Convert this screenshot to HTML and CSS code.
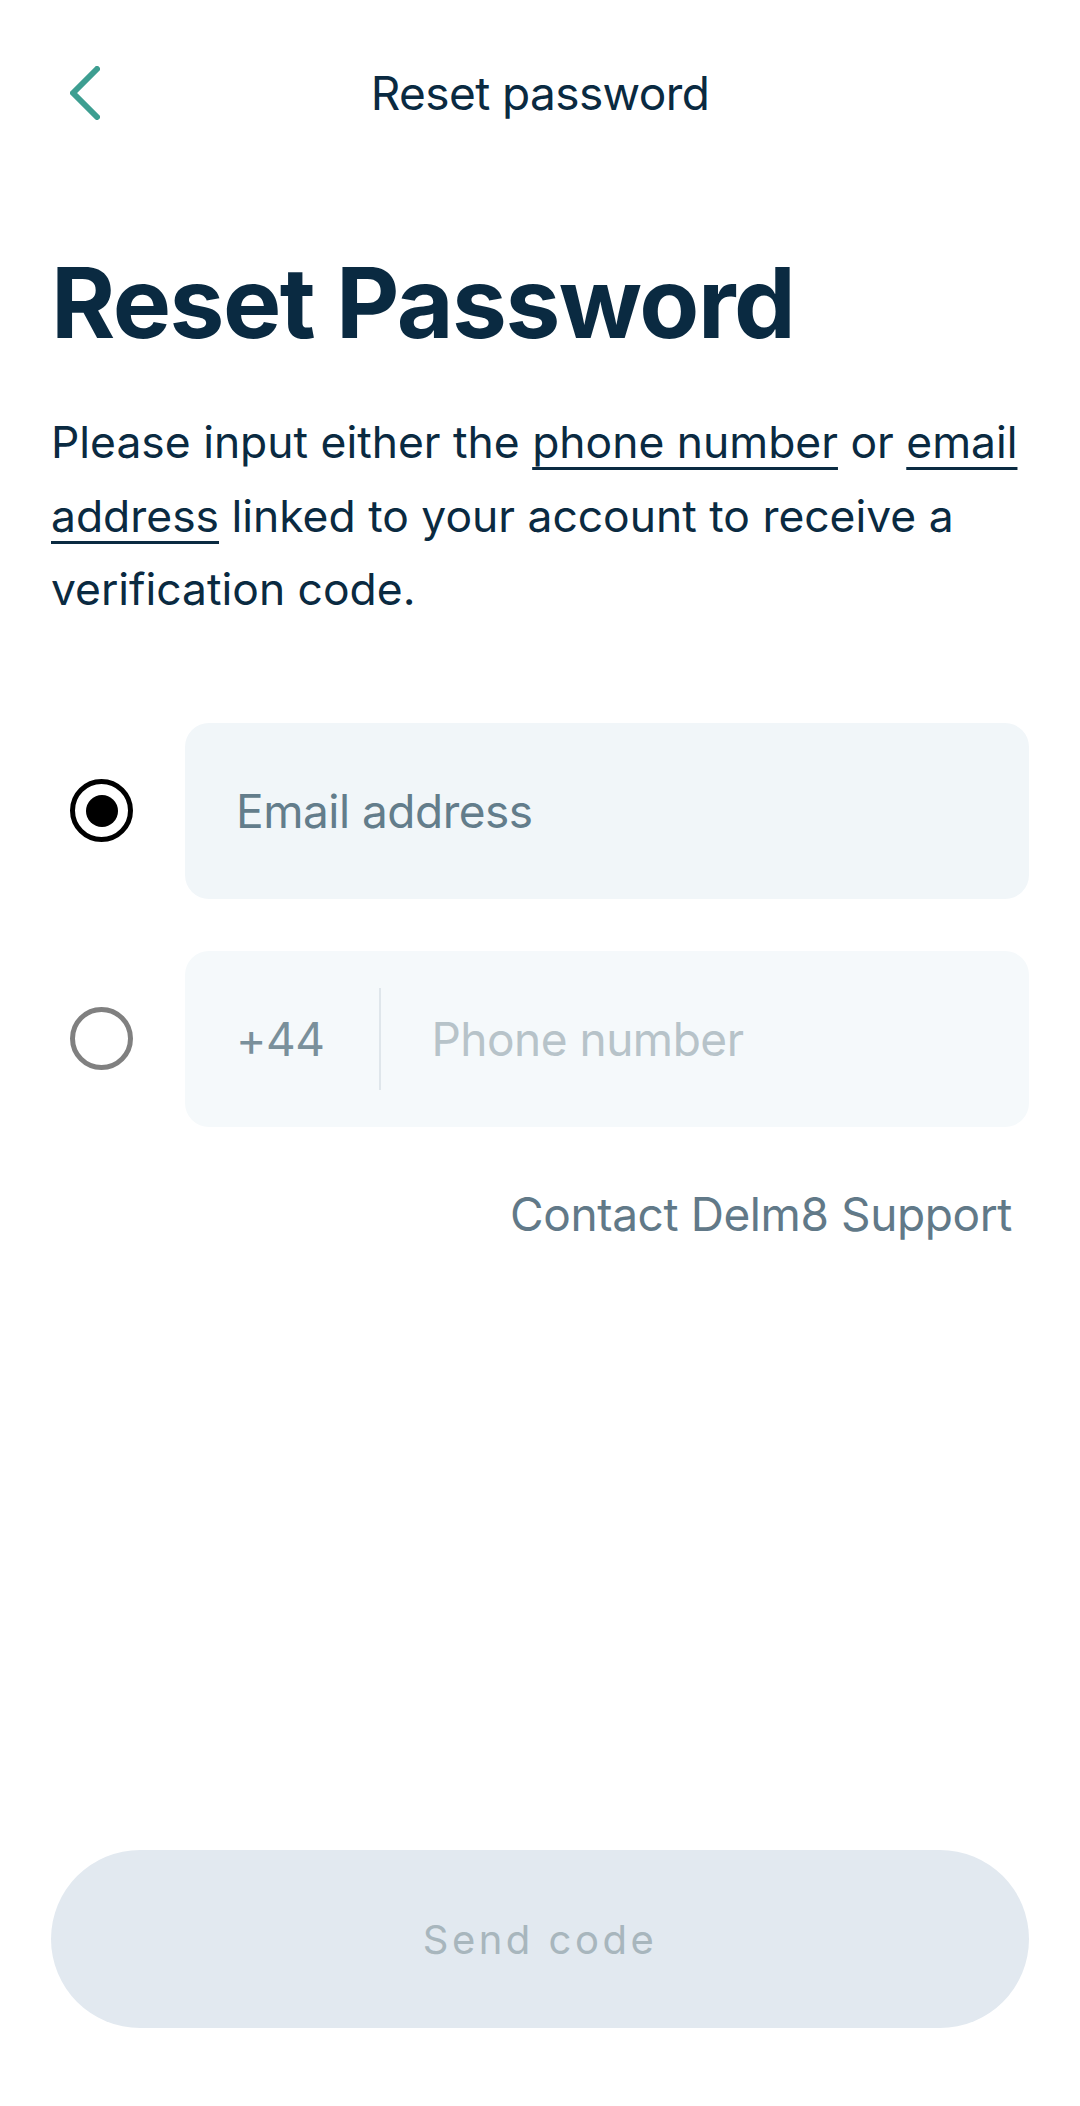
FILE: index.html
```html
<!DOCTYPE html>
<html lang="en">
<head>
  <meta charset="UTF-8" />
  <title>Reset password</title>
  <link rel="stylesheet" href="styles.css">
</head>
<body>

  <div class="page">
    <div class="nav">
      <a class="back" href="#">
        <svg width="30" height="54" viewBox="0 0 30 54">
          <polyline points="27,3 3,27 27,51" fill="none" stroke="#3d9e91" stroke-width="6" stroke-linecap="round" stroke-linejoin="round" />
        </svg>
      </a>
      <div class="nav-title">Reset password</div>
      <div></div>
    </div>

    <h1>Reset Password</h1>
    <p class="intro">Please input either the <u>phone number</u> or <u>email </u><u>address</u> linked to your account to receive a verification code.</p>

    <form class="reset-form">
      <label class="option">
        <span class="radio checked"></span>
        <span class="field">
          <input type="email" placeholder="Email address" />
        </span>
      </label>

      <label class="option">
        <span class="radio"></span>
        <span class="field phone">
          <span class="prefix">+44</span>
          <span class="divider"></span>
          <input type="tel" placeholder="Phone number" disabled />
        </span>
      </label>

      <a class="support" href="#">Contact Delm8 Support</a>
    </form>

    <button class="send-button" type="button" disabled>Send code</button>
  </div>

</body>
</html>
```

FILE: styles.css
```css
* {
  box-sizing: border-box;
}

body {
  margin: 0;
  font-family: 'Inter', 'Noto Sans', sans-serif;
  background: #ffffff;
  color: #0a2a41;
}

.page {
  min-height: 2106px;
  padding: 0 51px 78px;
  display: flex;
  flex-direction: column;
}

.nav {
  height: 184px;
  padding-top: 2px;
  display: grid;
  grid-template-columns: 1fr auto 1fr;
  align-items: center;
}

.back {
  display: flex;
  padding-left: 19px;
}

.nav-title {
  font-size: 46px;
  letter-spacing: -0.6px;
  color: #0a2a41;
}

h1 {
  margin: 60px 0 0;
  font-size: 98px;
  line-height: 118px;
  font-weight: 700;
  letter-spacing: -1.5px;
  color: #0a2a41;
}

.intro {
  margin: 44px 0 0;
  font-size: 44.4px;
  line-height: 73.5px;
  color: #0a2a41;
}

.intro u {
  text-decoration-thickness: 3px;
  text-underline-offset: 9px;
}

.reset-form {
  margin-top: 96px;
  display: flex;
  flex-direction: column;
  gap: 52px;
}

.option {
  display: flex;
  align-items: center;
  gap: 52px;
  padding-left: 19px;
}

.radio {
  width: 63px;
  height: 63px;
  flex: none;
  border-radius: 50%;
  border: 5.5px solid #808080;
  display: flex;
  align-items: center;
  justify-content: center;
}

.radio.checked {
  border-color: #000000;
}

.radio.checked::after {
  content: "";
  width: 32px;
  height: 32px;
  border-radius: 50%;
  background: #000000;
}

.field {
  flex: 1;
  min-width: 0;
  height: 176px;
  border-radius: 24px;
  background: #f1f6f9;
  padding: 0 51px;
  display: flex;
  align-items: center;
}

.field.phone {
  background: #f5f9fb;
}

.field input {
  flex: 1;
  min-width: 0;
  width: 100%;
  border: none;
  background: transparent;
  outline: none;
  padding: 0;
  font-family: inherit;
  font-size: 46px;
  letter-spacing: -0.5px;
  color: #0a2a41;
}

.field input::placeholder {
  color: #637d8b;
}

.field input:disabled::placeholder {
  color: #b7c3c9;
}

.prefix {
  font-size: 46px;
  letter-spacing: -0.5px;
  color: #7a909b;
}

.divider {
  width: 2px;
  height: 102px;
  flex: none;
  background: #dfe6eb;
  margin: 0 50px 0 55px;
}

.support {
  align-self: flex-end;
  margin: 7px 17px 0 0;
  font-size: 46px;
  line-height: 56px;
  letter-spacing: -0.4px;
  color: #617988;
  text-decoration: none;
}

.send-button {
  margin-top: auto;
  height: 178px;
  border: none;
  border-radius: 89px;
  background: #e2e9f0;
  font-family: inherit;
  font-size: 40px;
  letter-spacing: 3.5px;
  color: #a8b6bd;
}
```
